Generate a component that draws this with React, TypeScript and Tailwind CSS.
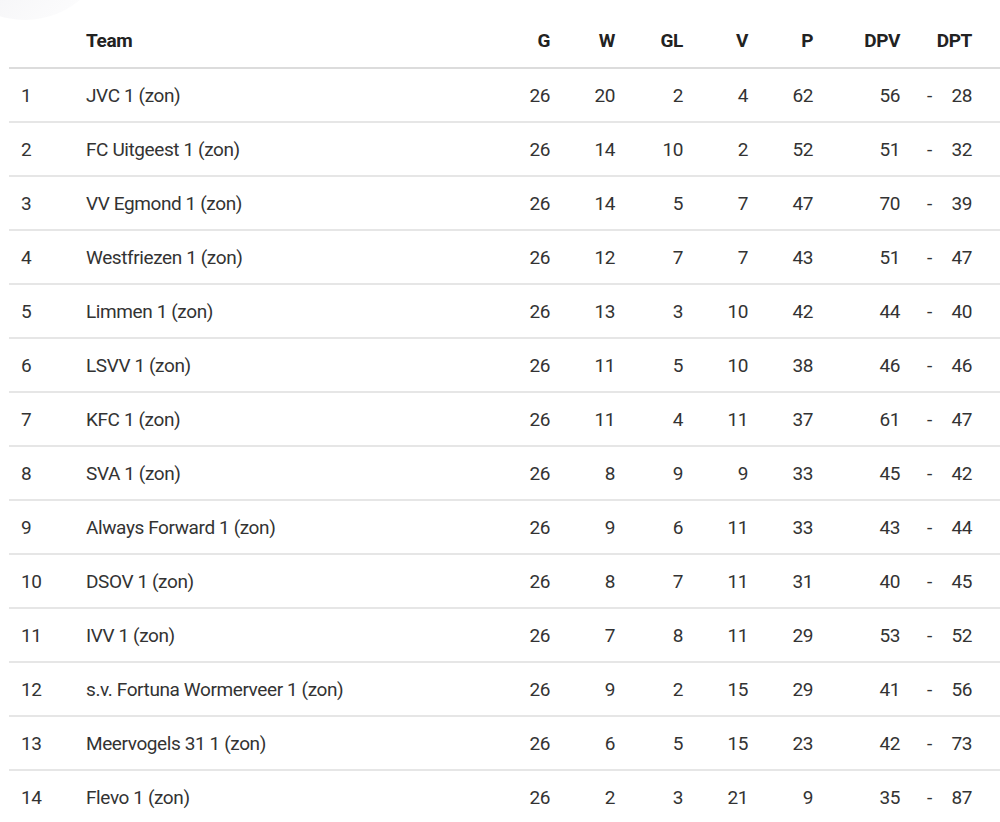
import React from 'react';

type Row = {
  pos: number;
  team: string;
  g: number;
  w: number;
  gl: number;
  v: number;
  p: number;
  dpv: number;
  dpt: number;
};

const rows: Row[] = [
  { pos: 1, team: 'JVC 1 (zon)', g: 26, w: 20, gl: 2, v: 4, p: 62, dpv: 56, dpt: 28 },
  { pos: 2, team: 'FC Uitgeest 1 (zon)', g: 26, w: 14, gl: 10, v: 2, p: 52, dpv: 51, dpt: 32 },
  { pos: 3, team: 'VV Egmond 1 (zon)', g: 26, w: 14, gl: 5, v: 7, p: 47, dpv: 70, dpt: 39 },
  { pos: 4, team: 'Westfriezen 1 (zon)', g: 26, w: 12, gl: 7, v: 7, p: 43, dpv: 51, dpt: 47 },
  { pos: 5, team: 'Limmen 1 (zon)', g: 26, w: 13, gl: 3, v: 10, p: 42, dpv: 44, dpt: 40 },
  { pos: 6, team: 'LSVV 1 (zon)', g: 26, w: 11, gl: 5, v: 10, p: 38, dpv: 46, dpt: 46 },
  { pos: 7, team: 'KFC 1 (zon)', g: 26, w: 11, gl: 4, v: 11, p: 37, dpv: 61, dpt: 47 },
  { pos: 8, team: 'SVA 1 (zon)', g: 26, w: 8, gl: 9, v: 9, p: 33, dpv: 45, dpt: 42 },
  { pos: 9, team: 'Always Forward 1 (zon)', g: 26, w: 9, gl: 6, v: 11, p: 33, dpv: 43, dpt: 44 },
  { pos: 10, team: 'DSOV 1 (zon)', g: 26, w: 8, gl: 7, v: 11, p: 31, dpv: 40, dpt: 45 },
  { pos: 11, team: 'IVV 1 (zon)', g: 26, w: 7, gl: 8, v: 11, p: 29, dpv: 53, dpt: 52 },
  { pos: 12, team: 's.v. Fortuna Wormerveer 1 (zon)', g: 26, w: 9, gl: 2, v: 15, p: 29, dpv: 41, dpt: 56 },
  { pos: 13, team: 'Meervogels 31 1 (zon)', g: 26, w: 6, gl: 5, v: 15, p: 23, dpv: 42, dpt: 73 },
  { pos: 14, team: 'Flevo 1 (zon)', g: 26, w: 2, gl: 3, v: 21, p: 9, dpv: 35, dpt: 87 },
];

const App: React.FC = () => {
  return (
    <div
      className="relative min-h-screen bg-white text-[#333] overflow-hidden"
      style={{ fontFamily: 'Roboto, "Liberation Sans", sans-serif' }}
    >
      {/* faint corner shadow */}
      <div className="pointer-events-none absolute -left-[60px] -top-[150px] w-[170px] h-[170px] rounded-full bg-gradient-to-br from-[#e9e9ee] to-white/0" />

      <div className="ml-[9px] text-[19px] tracking-[-0.4px]">
        {/* Header */}
        <div className="flex items-center h-[69px] pt-[15px] border-b-2 border-[#dcdcdc] font-bold text-[#222]">
          <div className="w-[77px] pl-[12px]"></div>
          <div className="w-[414px]">Team</div>
          <div className="w-[50px] text-right">G</div>
          <div className="w-[65px] text-right">W</div>
          <div className="w-[68px] text-right">GL</div>
          <div className="w-[65px] text-right">V</div>
          <div className="w-[65px] text-right">P</div>
          <div className="w-[87px] text-right">DPV</div>
          <div className="w-[72px] text-right whitespace-nowrap">DPT</div>
        </div>

        {/* Rows */}
        {rows.map((r) => (
          <div key={r.pos} className="flex items-center h-[54px] pt-[2px] border-b-2 border-[#e6e6e6]">
            <div className="w-[77px] pl-[12px]">{r.pos}</div>
            <div className="w-[414px] whitespace-nowrap">{r.team}</div>
            <div className="w-[50px] text-right">{r.g}</div>
            <div className="w-[65px] text-right">{r.w}</div>
            <div className="w-[68px] text-right">{r.gl}</div>
            <div className="w-[65px] text-right">{r.v}</div>
            <div className="w-[65px] text-right">{r.p}</div>
            <div className="w-[87px] text-right">{r.dpv}</div>
            <div className="w-[40px] pl-[27px]">-</div>
            <div className="w-[32px] text-right">{r.dpt}</div>
          </div>
        ))}
      </div>
    </div>
  );
};

export default App;
